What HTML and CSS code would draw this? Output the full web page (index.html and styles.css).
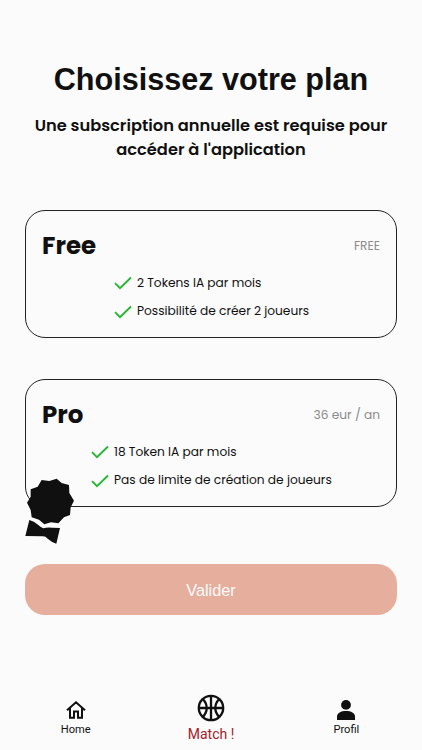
FILE: index.html
```html
<!DOCTYPE html>
<html lang="fr">
<head>
    <meta charset="UTF-8">
    <meta name="viewport" content="width=device-width, initial-scale=1.0">
    <title>Choisissez votre plan</title>
    <link rel="stylesheet" href="styles.css">
</head>
<body>
    <main class="plans">
        <h1>Choisissez votre plan</h1>
        <p class="subtitle">Une subscription annuelle est requise pour<br>accéder à l'application</p>

        <section class="card">
            <div class="card-header">
                <h2>Free</h2>
                <span class="price">FREE</span>
            </div>
            <ul class="features features-free">
                <li>
                    <svg class="check" viewBox="0 0 18 14"><path d="M1 7.2L6 12.2L17 1.5"/></svg>
                    <span>2 Tokens IA par mois</span>
                </li>
                <li>
                    <svg class="check" viewBox="0 0 18 14"><path d="M1 7.2L6 12.2L17 1.5"/></svg>
                    <span>Possibilité de créer 2 joueurs</span>
                </li>
            </ul>
        </section>

        <section class="card card-pro">
            <div class="card-header">
                <h2>Pro</h2>
                <span class="price">36 eur / an</span>
            </div>
            <ul class="features">
                <li>
                    <svg class="check" viewBox="0 0 18 14"><path d="M1 7.2L6 12.2L17 1.5"/></svg>
                    <span>18 Token IA par mois</span>
                </li>
                <li>
                    <svg class="check" viewBox="0 0 18 14"><path d="M1 7.2L6 12.2L17 1.5"/></svg>
                    <span>Pas de limite de création de joueurs</span>
                </li>
            </ul>
            <svg class="badge" viewBox="0 0 210 240">
                <path d="M80 30L103 33L125 26L140 39L162 45L163 69L177 92L167 112L165 135L147 142L130 160L108 157L88 163L72 149L50 142L47 120L36 98L47 80L47 58L68 50Z"/>
                <path d="M43 150Q58 154 67 163Q77 172 85 175Q96 171 112 173L135 174L124 221Q108 215 98 206Q91 198 82 199L31 198Z"/>
            </svg>
        </section>

        <button type="button" class="submit">Valider</button>
    </main>

    <nav class="tabs">
        <a class="tab">
            <svg class="icon-home" viewBox="0 0 20 18"><path d="M1 9.2L10 1.3L19 9.2M4 7.2V16.7H8V10.5H12V16.7H16V7.2"/></svg>
            <span>Home</span>
        </a>
        <a class="tab active">
            <svg class="icon-ball" viewBox="0 0 28 28"><circle cx="14" cy="14" r="12.2"/><path d="M14 2V26M2 14H26M5.8 5C11 10.5 11 17.5 5.8 23M22.2 5C17 10.5 17 17.5 22.2 23"/></svg>
            <span>Match !</span>
        </a>
        <a class="tab">
            <svg class="icon-user" viewBox="0 0 18 20"><circle cx="9" cy="4.9" r="4.9"/><path d="M0 20V16.5C0 13 4 11 9 11S18 13 18 16.5V20Z"/></svg>
            <span>Profil</span>
        </a>
    </nav>
</body>
</html>
```
FILE: styles.css
```css
* {
    box-sizing: border-box;
}

body {
    display: flex;
    flex-direction: column;
    height: 750px;
    margin: 0;
    background-color: #fbfbfb;
    color: #101010;
    font-family: Poppins, Inter, sans-serif;
    overflow: hidden;
}

.plans {
    display: flex;
    flex-direction: column;
    padding: 61px 25px 0;
}

h1 {
    margin: 0;
    font: bold 30.6px/37px "Liberation Sans", Arial, sans-serif;
    text-align: center;
}

.subtitle {
    margin: 16px 0 0;
    font-size: 16.25px;
    font-weight: 600;
    line-height: 24px;
    text-align: center;
    white-space: nowrap;
}

.card {
    position: relative;
    height: 128px;
    margin-top: 48px;
    padding: 17px 16px 0;
    border: 1px solid #222;
    border-radius: 20px;
}

.card-pro {
    margin-top: 41px;
}

.card-header {
    display: flex;
    justify-content: space-between;
    align-items: center;
    height: 36px;
}

h2 {
    margin: 0;
    font-size: 24.5px;
    font-weight: 700;
    line-height: 36px;
}

.price {
    color: #8c8c8c;
    font-size: 12.2px;
}

.features {
    display: flex;
    flex-direction: column;
    gap: 9px;
    margin: 9px 0 0;
    padding: 0 0 0 49px;
    list-style: none;
    font-size: 12.2px;
    line-height: 20px;
    white-space: nowrap;
}

.features-free {
    padding-left: 72px;
}

.features li {
    display: flex;
    align-items: center;
    gap: 5px;
    height: 19.5px;
}

.check {
    width: 18px;
    height: 14px;
    margin-top: 1px;
    fill: none;
    stroke: #20b72c;
    stroke-width: 1.8;
}

.badge {
    position: absolute;
    left: -11px;
    top: 90px;
    width: 70px;
    height: 80px;
    fill: #101010;
}

.submit {
    height: 51px;
    margin-top: 57px;
    padding-top: 2px;
    border: none;
    border-radius: 20px;
    background-color: #e6ae9d;
    color: #fbfbfb;
    font: 16.3px "Liberation Sans", Arial, sans-serif;
}

.tabs {
    display: flex;
    justify-content: space-between;
    margin-top: auto;
    padding: 0 8px 7px;
    height: 57px;
}

.tab {
    display: flex;
    flex-direction: column;
    align-items: center;
    width: 136px;
    font: 11.1px/14px Roboto, sans-serif;
}

.active {
    color: #a52126;
    font-size: 14px;
    line-height: 18px;
}

.icon-home {
    width: 20px;
    height: 18px;
    margin: 8px 0 4px;
    fill: none;
    stroke: #101010;
    stroke-width: 2;
}

.icon-ball {
    width: 28px;
    height: 28px;
    margin: 1px 0 3px;
    fill: none;
    stroke: #101010;
    stroke-width: 2.3;
}

.icon-user {
    width: 18px;
    height: 20px;
    margin: 7px 0 3px;
    fill: #101010;
}
```
